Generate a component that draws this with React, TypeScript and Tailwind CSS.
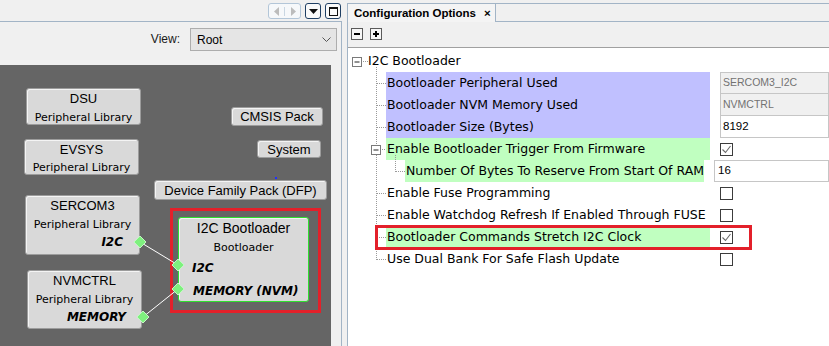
import React from "react";

function CanvasBox({ className, children }: { className: string; children: React.ReactNode }) {
  return (
    <div
      className={
        "absolute flex flex-col rounded-[3px] border border-[#9c9c9c] bg-[#d9d9d9] shadow-[inset_1px_1px_0_#f4f4f4] " +
        className
      }
    >
      {children}
    </div>
  );
}

function Check({ on }: { on?: boolean }) {
  return (
    <div className="flex h-[13px] w-[13px] items-center justify-center border border-[#3c3c3c] bg-white">
      {on && (
        <svg width="11" height="11" viewBox="0 0 11 11">
          <path d="M1.5 5.5 L4.5 8.5 L9.5 2" fill="none" stroke="#6a6a6a" strokeWidth="1.1" />
        </svg>
      )}
    </div>
  );
}

export default function App() {
  return (
    <div className="flex h-[346px] w-[829px] overflow-hidden bg-[#f0f0f0] font-['Liberation_Sans',sans-serif] text-black">
      {/* left: graph view */}
      <div className="flex w-[342px] flex-col">
        <div className="flex h-[21px] items-start justify-end gap-[4px] pr-[1px] pt-[3px]">
          <div className="flex h-[16px] w-[33px] items-center rounded-[3px] border border-[#b3c6d8] bg-[#f6f8fa]">
            <div className="flex flex-1 justify-center border-r border-[#c9d6e2]">
              <svg width="6" height="9" viewBox="0 0 6 9">
                <path d="M5 0 L0 4.5 L5 9 Z" fill="#bcbcbc" />
              </svg>
            </div>
            <div className="flex flex-1 justify-center">
              <svg width="6" height="9" viewBox="0 0 6 9">
                <path d="M1 0 L6 4.5 L1 9 Z" fill="#bcbcbc" />
              </svg>
            </div>
          </div>
          <div className="flex h-[16px] w-[16px] items-center justify-center rounded-[3px] border border-[#1f3f63] bg-[#fafafa]">
            <svg width="9" height="5" viewBox="0 0 9 5">
              <path d="M0 0 H9 L4.5 5 Z" fill="#111" />
            </svg>
          </div>
          <div className="flex h-[16px] w-[16px] items-center justify-center rounded-[3px] border border-[#1f3f63] bg-[#fafafa]">
            <div className="h-[9px] w-[9px] border border-[#111] border-t-2" />
          </div>
        </div>
        <div className="flex flex-1 flex-col border-r border-t border-[#a2b4c6]">
          <div className="flex h-[43px] items-start justify-end pr-[4px] pt-[6px]">
            <span className="mr-[10px] mt-[4px] text-[12px] leading-[14px] text-[#1a1a1a]">View:</span>
            <div className="flex h-[23px] w-[147px] items-center justify-between border border-[#adadad] bg-[#e5e5e5] pl-[6px] pr-[5px]">
              <span className="text-[12px] leading-[14px]">Root</span>
              <svg width="9" height="6" viewBox="0 0 9 6">
                <path d="M0.5 0.5 L4.5 4.5 L8.5 0.5" fill="none" stroke="#555" strokeWidth="1" />
              </svg>
            </div>
          </div>
          <div className="flex flex-1">
            <div className="relative w-[331px] bg-[#656565]">
              <CanvasBox className="left-[26px] top-[23px] h-[37px] w-[115px] items-center">
                <span className="mt-[2px] text-[13px] leading-[16px]">DSU</span>
                <span className="mt-[4px] font-['DejaVu_Sans',sans-serif] text-[11px] leading-[13px]">Peripheral Library</span>
              </CanvasBox>
              <CanvasBox className="left-[24px] top-[74px] h-[36px] w-[115px] items-center">
                <span className="mt-[2px] text-[13px] leading-[16px]">EVSYS</span>
                <span className="mt-[3px] font-['DejaVu_Sans',sans-serif] text-[11px] leading-[13px]">Peripheral Library</span>
              </CanvasBox>
              <CanvasBox className="left-[25px] top-[130px] h-[60px] w-[115px] items-center">
                <span className="mt-[2px] text-[13px] leading-[16px]">SERCOM3</span>
                <span className="mt-[4px] font-['DejaVu_Sans',sans-serif] text-[11px] leading-[13px]">Peripheral Library</span>
                <span className="mt-[4px] self-end pr-[16px] font-['DejaVu_Sans',sans-serif] text-[12px] font-bold italic leading-[14px]">I2C</span>
              </CanvasBox>
              <CanvasBox className="left-[27px] top-[205px] h-[59px] w-[115px] items-center">
                <span className="mt-[2px] text-[13px] leading-[16px]">NVMCTRL</span>
                <span className="mt-[4px] font-['DejaVu_Sans',sans-serif] text-[11px] leading-[13px]">Peripheral Library</span>
                <span className="mt-[4px] self-end pr-[15px] font-['DejaVu_Sans',sans-serif] text-[12px] font-bold italic leading-[14px]">MEMORY</span>
              </CanvasBox>
              <CanvasBox className="left-[231px] top-[42px] h-[19px] w-[92px] items-center justify-center">
                <span className="text-[13px] leading-[15px]">CMSIS Pack</span>
              </CanvasBox>
              <CanvasBox className="left-[257px] top-[75px] h-[18px] w-[64px] items-center justify-center">
                <span className="text-[13px] leading-[15px]">System</span>
              </CanvasBox>
              <CanvasBox className="left-[154px] top-[115px] h-[20px] w-[173px] items-center justify-center">
                <span className="text-[13px] leading-[15px]">Device Family Pack (DFP)</span>
              </CanvasBox>
              <div className="absolute left-[275px] top-[112px] h-[2px] w-[2px] bg-[#2030ff]" />

              <div className="absolute left-[170px] top-[143px] h-[105px] w-[151px] border-[3px] border-[#e3202a]" />
              <div className="absolute left-[178px] top-[152px] flex h-[85px] w-[131px] flex-col rounded-[3px] border border-[#2ee02e] bg-[#d9d9d9] shadow-[inset_1px_1px_0_#f4f4f4]">
                <span className="mt-[2px] self-center text-[14px] leading-[17px]">I2C Bootloader</span>
                <span className="mt-[4px] self-center font-['DejaVu_Sans',sans-serif] text-[11px] leading-[13px]">Bootloader</span>
                <span className="mt-[7px] pl-[13px] font-['DejaVu_Sans',sans-serif] text-[12px] font-bold italic leading-[14px]">I2C</span>
                <span className="mt-[9px] pl-[14px] font-['DejaVu_Sans',sans-serif] text-[12px] font-bold italic leading-[14px]">MEMORY (NVM)</span>
              </div>

              <svg className="pointer-events-none absolute left-0 top-0" width="331" height="281">
                <line x1="140" y1="177" x2="178" y2="200" stroke="#fff" strokeWidth="1" />
                <line x1="143" y1="252" x2="178" y2="224" stroke="#fff" strokeWidth="1" />
                {[
                  [140, 177],
                  [178, 200],
                  [178, 224],
                  [143, 252],
                ].map(([x, y], i) => (
                  <polygon
                    key={i}
                    points={`${x},${y - 6} ${x + 6},${y} ${x},${y + 6} ${x - 6},${y}`}
                    fill="#7ff07f"
                    stroke="#c4f7c4"
                    strokeWidth="1"
                  />
                ))}
              </svg>
            </div>
          </div>
        </div>
      </div>

      <div className="w-[5px]" />

      {/* right: configuration options */}
      <div className="flex flex-1 flex-col pt-[3px]">
        <div className="flex flex-1 flex-col border-l border-t border-[#a2b4c6]">
          <div className="flex h-[18px]">
            <div className="flex w-[148px] items-center border-r border-[#a2b4c6] bg-[#f4f4f4] pl-[6px]">
              <span className="text-[11.5px] font-bold leading-[14px]">Configuration Options</span>
              <span className="ml-[8px] text-[11.5px] font-bold leading-[14px]">×</span>
            </div>
            <div className="flex-1 border-b border-[#a2b4c6]" />
          </div>
          <div className="flex h-[26px] items-start gap-[7px] border-b border-[#a0a0a0] pl-[3px] pt-[6px]">
            <div className="flex h-[12px] w-[12px] items-center justify-center border border-[#5a5a5a] bg-[#f6f6f6]">
              <div className="h-[2px] w-[6px] bg-black" />
            </div>
            <div className="relative flex h-[12px] w-[12px] items-center justify-center border border-[#5a5a5a] bg-[#f6f6f6]">
              <div className="h-[2px] w-[6px] bg-black" />
              <div className="absolute h-[6px] w-[2px] bg-black" />
            </div>
          </div>

          <div className="relative flex-1 bg-white font-['DejaVu_Sans',sans-serif] text-[12.5px]">
            <div className="flex flex-col pt-[2px]">
              <div className="flex h-[22px] items-center pl-[20px]">I2C Bootloader</div>

              <div className="flex h-[22px]">
                <div className="w-[38px]" />
                <div className="flex w-[324px] items-center bg-[#c0c0ff] pl-[1px]">Bootloader Peripheral Used</div>
                <div className="ml-[10px] flex flex-1 items-center border border-[#c6c6c6] bg-[#f0f0f0] pl-[2px] font-['Liberation_Sans',sans-serif] text-[10.5px] text-[#727272]">SERCOM3_I2C</div>
              </div>
              <div className="flex h-[22px]">
                <div className="w-[38px]" />
                <div className="flex w-[324px] items-center bg-[#c0c0ff] pl-[1px]">Bootloader NVM Memory Used</div>
                <div className="ml-[10px] flex flex-1 items-center border border-t-0 border-[#c6c6c6] bg-[#f0f0f0] pl-[2px] font-['Liberation_Sans',sans-serif] text-[10.5px] text-[#727272]">NVMCTRL</div>
              </div>
              <div className="flex h-[22px]">
                <div className="w-[38px]" />
                <div className="flex w-[324px] items-center bg-[#c0c0ff] pl-[1px]">Bootloader Size (Bytes)</div>
                <div className="ml-[10px] flex flex-1 items-center border border-t-0 border-[#c6c6c6] bg-white pl-[2px] font-['Liberation_Sans',sans-serif] text-[11.5px]">8192</div>
              </div>
              <div className="flex h-[22px]">
                <div className="w-[38px]" />
                <div className="flex w-[324px] items-center bg-[#c0ffc0] pl-[1px]">Enable Bootloader Trigger From Firmware</div>
                <div className="ml-[10px] flex flex-1 items-center">
                  <Check on />
                </div>
              </div>
              <div className="flex h-[22px]">
                <div className="w-[57px]" />
                <div className="flex w-[299px] items-center bg-[#c0ffc0] pl-[1px]">Number Of Bytes To Reserve From Start Of RAM</div>
                <div className="ml-[10px] flex flex-1 items-center border border-[#c6c6c6] bg-white pl-[3px] font-['Liberation_Sans',sans-serif] text-[11.5px]">16</div>
              </div>
              <div className="flex h-[22px]">
                <div className="w-[38px]" />
                <div className="flex w-[324px] items-center pl-[1px]">Enable Fuse Programming</div>
                <div className="ml-[10px] flex flex-1 items-center">
                  <Check />
                </div>
              </div>
              <div className="flex h-[22px]">
                <div className="w-[38px]" />
                <div className="flex w-[324px] items-center pl-[1px]">Enable Watchdog Refresh If Enabled Through FUSE</div>
                <div className="ml-[10px] flex flex-1 items-center">
                  <Check />
                </div>
              </div>
              <div className="flex h-[22px]">
                <div className="w-[38px]" />
                <div className="flex w-[324px] items-center bg-[#c0ffc0] pl-[1px]">Bootloader Commands Stretch I2C Clock</div>
                <div className="ml-[10px] flex flex-1 items-center">
                  <Check on />
                </div>
              </div>
              <div className="flex h-[22px]">
                <div className="w-[38px]" />
                <div className="flex w-[324px] items-center pl-[1px]">Use Dual Bank For Safe Flash Update</div>
                <div className="ml-[10px] flex flex-1 items-center">
                  <Check />
                </div>
              </div>
            </div>

            {/* tree connector lines */}
            <svg className="pointer-events-none absolute left-0 top-0" width="120" height="230">
              <g stroke="#9a9a9a" strokeWidth="1" strokeDasharray="1 1" fill="none">
                <line x1="15" y1="13.5" x2="20" y2="13.5" />
                <line x1="28.5" y1="19" x2="28.5" y2="212" />
                {[1, 2, 3, 6, 7, 8, 9].map((i) => (
                  <line key={i} x1="29" y1={13.5 + 22 * i} x2="38" y2={13.5 + 22 * i} />
                ))}
                <line x1="34" y1="101.5" x2="38" y2="101.5" />
                <line x1="47.5" y1="107" x2="47.5" y2="124" />
                <line x1="48" y1="123.5" x2="57" y2="123.5" />
              </g>
              <g>
                <rect x="4.5" y="9.5" width="9" height="9" fill="#fff" stroke="#7a7a7a" />
                <line x1="6.5" y1="14" x2="11.5" y2="14" stroke="#222" />
                <rect x="23.5" y="97.5" width="9" height="9" fill="#fff" stroke="#7a7a7a" />
                <line x1="25.5" y1="102" x2="30.5" y2="102" stroke="#222" />
              </g>
            </svg>

            <div className="absolute left-[27px] top-[177px] h-[25px] w-[377px] border-[3px] border-[#e3202a]" />
          </div>
        </div>
      </div>
    </div>
  );
}
